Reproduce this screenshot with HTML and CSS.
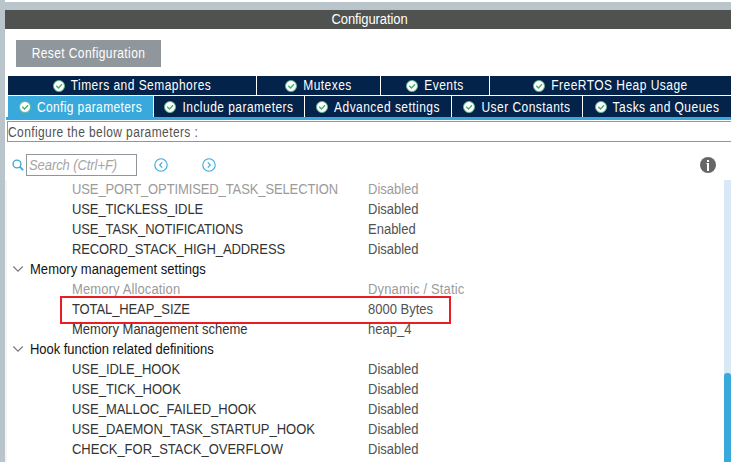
FILE: index.html
```html
<!DOCTYPE html>
<html lang="en">
<head>
<meta charset="utf-8">
<title>Configuration</title>
<link rel="stylesheet" href="styles.css">
</head>
<body>
<svg class="defs" width="0" height="0">
  <symbol id="check" viewBox="0 0 12 12"><circle cx="6" cy="6" r="5.5" fill="#fff" stroke="#62b98b" stroke-width=".9"/><path d="M3.2 5.8 5.5 8 9 4.3" fill="none" stroke="#3bad70" stroke-width="1.3"/></symbol>
  <symbol id="chevron" viewBox="0 0 12 8"><path d="M1.3 1.5 6 6.2l4.7-4.7" fill="none" stroke="#777" stroke-width="1.1"/></symbol>
</svg>
<main class="window">
  <header class="title"><span>Configuration</span></header>
  <section class="panel">
    <button class="reset"><span>Reset Configuration</span></button>
    <nav class="tabs">
      <div class="tab-row upper">
        <div class="tab"><svg class="check"><use href="#check"/></svg><span>Timers and Semaphores</span></div>
        <div class="tab"><svg class="check"><use href="#check"/></svg><span>Mutexes</span></div>
        <div class="tab"><svg class="check"><use href="#check"/></svg><span>Events</span></div>
        <div class="tab"><svg class="check"><use href="#check"/></svg><span>FreeRTOS Heap Usage</span></div>
      </div>
      <div class="tab-row lower">
        <div class="tab active"><svg class="check"><use href="#check"/></svg><span>Config parameters</span></div>
        <div class="tab"><svg class="check"><use href="#check"/></svg><span>Include parameters</span></div>
        <div class="tab"><svg class="check"><use href="#check"/></svg><span>Advanced settings</span></div>
        <div class="tab"><svg class="check"><use href="#check"/></svg><span>User Constants</span></div>
        <div class="tab"><svg class="check"><use href="#check"/></svg><span>Tasks and Queues</span></div>
      </div>
    </nav>
    <div class="hint"><span>Configure the below parameters :</span></div>
    <div class="toolbar">
      <svg class="magnifier" viewBox="0 0 12 12"><circle cx="5" cy="5" r="3.9" fill="none" stroke="#39a9dc" stroke-width="1.4"/><path d="m7.8 7.8 3.4 3.4" stroke="#39a9dc" stroke-width="1.8"/></svg>
      <div class="search"><span>Search (Ctrl+F)</span></div>
      <svg class="step" viewBox="0 0 14 14"><circle cx="7" cy="7" r="6.2"/><path d="M8.2 4.4 5.7 7l2.5 2.6"/></svg>
      <svg class="step" viewBox="0 0 14 14"><circle cx="7" cy="7" r="6.2"/><path d="M5.8 4.4 8.3 7 5.8 9.6"/></svg>
      <svg class="info" viewBox="0 0 16 16"><circle cx="8" cy="8" r="8" fill="#666"/><path d="M7 3h2v2H7zM6.5 6H9v8H7V7h-.5z" fill="#fff"/></svg>
    </div>
    <div class="tree">
      <div class="rows">
        <div class="row off"><span class="caps tight">USE_PORT_OPTIMISED_TASK_SELECTION</span><span class="value">Disabled</span></div>
        <div class="row"><span class="caps tight">USE_TICKLESS_IDLE</span><span class="value">Disabled</span></div>
        <div class="row"><span class="caps tight">USE_TASK_NOTIFICATIONS</span><span class="value">Enabled</span></div>
        <div class="row"><span class="caps tight">RECORD_STACK_HIGH_ADDRESS</span><span class="value">Disabled</span></div>
        <div class="group"><svg class="chevron"><use href="#chevron"/></svg><span class="heading">Memory management settings</span></div>
        <div class="row off"><span class="name">Memory Allocation</span><span class="value wide">Dynamic / Static</span></div>
        <div class="row marked"><span class="caps tight">TOTAL_HEAP_SIZE</span><span class="value">8000 Bytes</span></div>
        <div class="row"><span>Memory Management scheme</span><span class="value">heap_4</span></div>
        <div class="group"><svg class="chevron"><use href="#chevron"/></svg><span>Hook function related definitions</span></div>
        <div class="row"><span class="caps">USE_IDLE_HOOK</span><span class="value">Disabled</span></div>
        <div class="row"><span class="caps">USE_TICK_HOOK</span><span class="value">Disabled</span></div>
        <div class="row"><span class="caps">USE_MALLOC_FAILED_HOOK</span><span class="value">Disabled</span></div>
        <div class="row"><span class="caps">USE_DAEMON_TASK_STARTUP_HOOK</span><span class="value">Disabled</span></div>
        <div class="row"><span class="caps">CHECK_FOR_STACK_OVERFLOW</span><span class="value">Disabled</span></div>
      </div>
      <div class="scrollbar"><div class="thumb"></div></div>
    </div>
  </section>
</main>
</body>
</html>
```
FILE: styles.css
```css
*, ::after { box-sizing: border-box; }
body {
  margin: 0;
  height: 462px;
  overflow: hidden;
  background: #fff;
  font: 13px/20px "Liberation Sans", Arial, sans-serif;
}
svg { display: block; flex: none; }
span { display: inline-block; transform: scaleY(1.08); }
.defs { position: absolute; }
.window {
  height: 462px;
  border-left: 5px solid #b9c4cb;
  padding-top: 2px;
  overflow: hidden;
}
.title {
  height: 27px;
  border-top: 8px solid #b9c4cb;
  background: #50524f;
  color: #fff;
  text-align: center;
  line-height: 19px;
  letter-spacing: -.1px;
  padding-left: 3px;
}
.panel { padding-top: 11px; }
.reset {
  display: block;
  width: 145px;
  height: 27px;
  margin-left: 11px;
  padding: 0;
  border: 0;
  background: #8f979d;
  color: #fff;
  font: inherit;
  font-size: 12px;
  line-height: 27px;
  letter-spacing: .4px;
}
.reset span, .tab span, .hint span { transform: scaleY(1.15); }
.tabs {
  margin: 9px 0 0 1px;
  border-bottom: 3px solid #39a9dc;
  padding-left: 2px;
  color: #fff;
  font-size: 12px;
  letter-spacing: .46px;
}
.tab-row { display: grid; column-gap: 1px; }
.upper { grid-template-columns: 248px 123px 108px 1fr; height: 20px; padding-bottom: 1px; line-height: 19px; }
.lower { grid-template-columns: 145px 150px 146px 130px 1fr; height: 21px; }
.tab {
  display: flex;
  align-items: center;
  justify-content: center;
  gap: 6px;
  background: #03234b;
  white-space: nowrap;
}
.tab.active { background: #39a9dc; letter-spacing: .38px; }
.check { width: 12px; height: 12px; }
.hint {
  margin: 1px 0 0 2px;
  height: 21px;
  border: 1px solid #8f979d;
  border-right: 0;
  font-size: 12px;
  line-height: 20px;
  color: #525252;
  letter-spacing: .4px;
}
.toolbar {
  display: flex;
  align-items: center;
  height: 22px;
  margin: 12px 15px 0 7px;
}
.magnifier { width: 12px; height: 12px; }
.search {
  width: 111px;
  height: 22px;
  margin: 0 17px 0 2px;
  border: 1px solid #8f979d;
  padding-left: 2px;
  color: #a5a5a5;
  font-style: italic;
  line-height: 22px;
  letter-spacing: -.08px;
}
.step { width: 14px; height: 14px; margin-right: 34px; fill: none; stroke: #39a9dc; stroke-width: 1.1; }
.info { width: 16px; height: 16px; margin-left: auto; }
.tree {
  display: flex;
  height: 282px;
  margin-top: 4px;
  border-left: 2px solid #f4f4f4;
}
.rows { flex: 1; }
.row {
  display: grid;
  grid-template-columns: 296px 1fr;
  height: 20px;
  padding-left: 65px;
  color: #333;
  white-space: nowrap;
}
.value { color: #525252; }
.row.off, .off .value { color: #9b9b9b; }
.caps { letter-spacing: -.02px; }
.caps.tight { letter-spacing: -.11px; }
.name { letter-spacing: .12px; }
.wide { letter-spacing: .16px; }
.group {
  display: flex;
  align-items: center;
  gap: 6px;
  height: 20px;
  padding-left: 5px;
  color: #111;
  letter-spacing: -.04px;
}
.heading { letter-spacing: .04px; }
.chevron { width: 12px; height: 8px; margin-top: -2px; }
.marked { position: relative; }
.marked::after {
  content: "";
  position: absolute;
  left: 53px;
  top: -4px;
  width: 391px;
  height: 28px;
  border: 2px solid #ed1c24;
}
.scrollbar { width: 7px; background: #d8e8f6; padding-top: 193px; }
.thumb { height: 89px; background: #39a9dc; border-radius: 3px 3px 0 0; }
```
